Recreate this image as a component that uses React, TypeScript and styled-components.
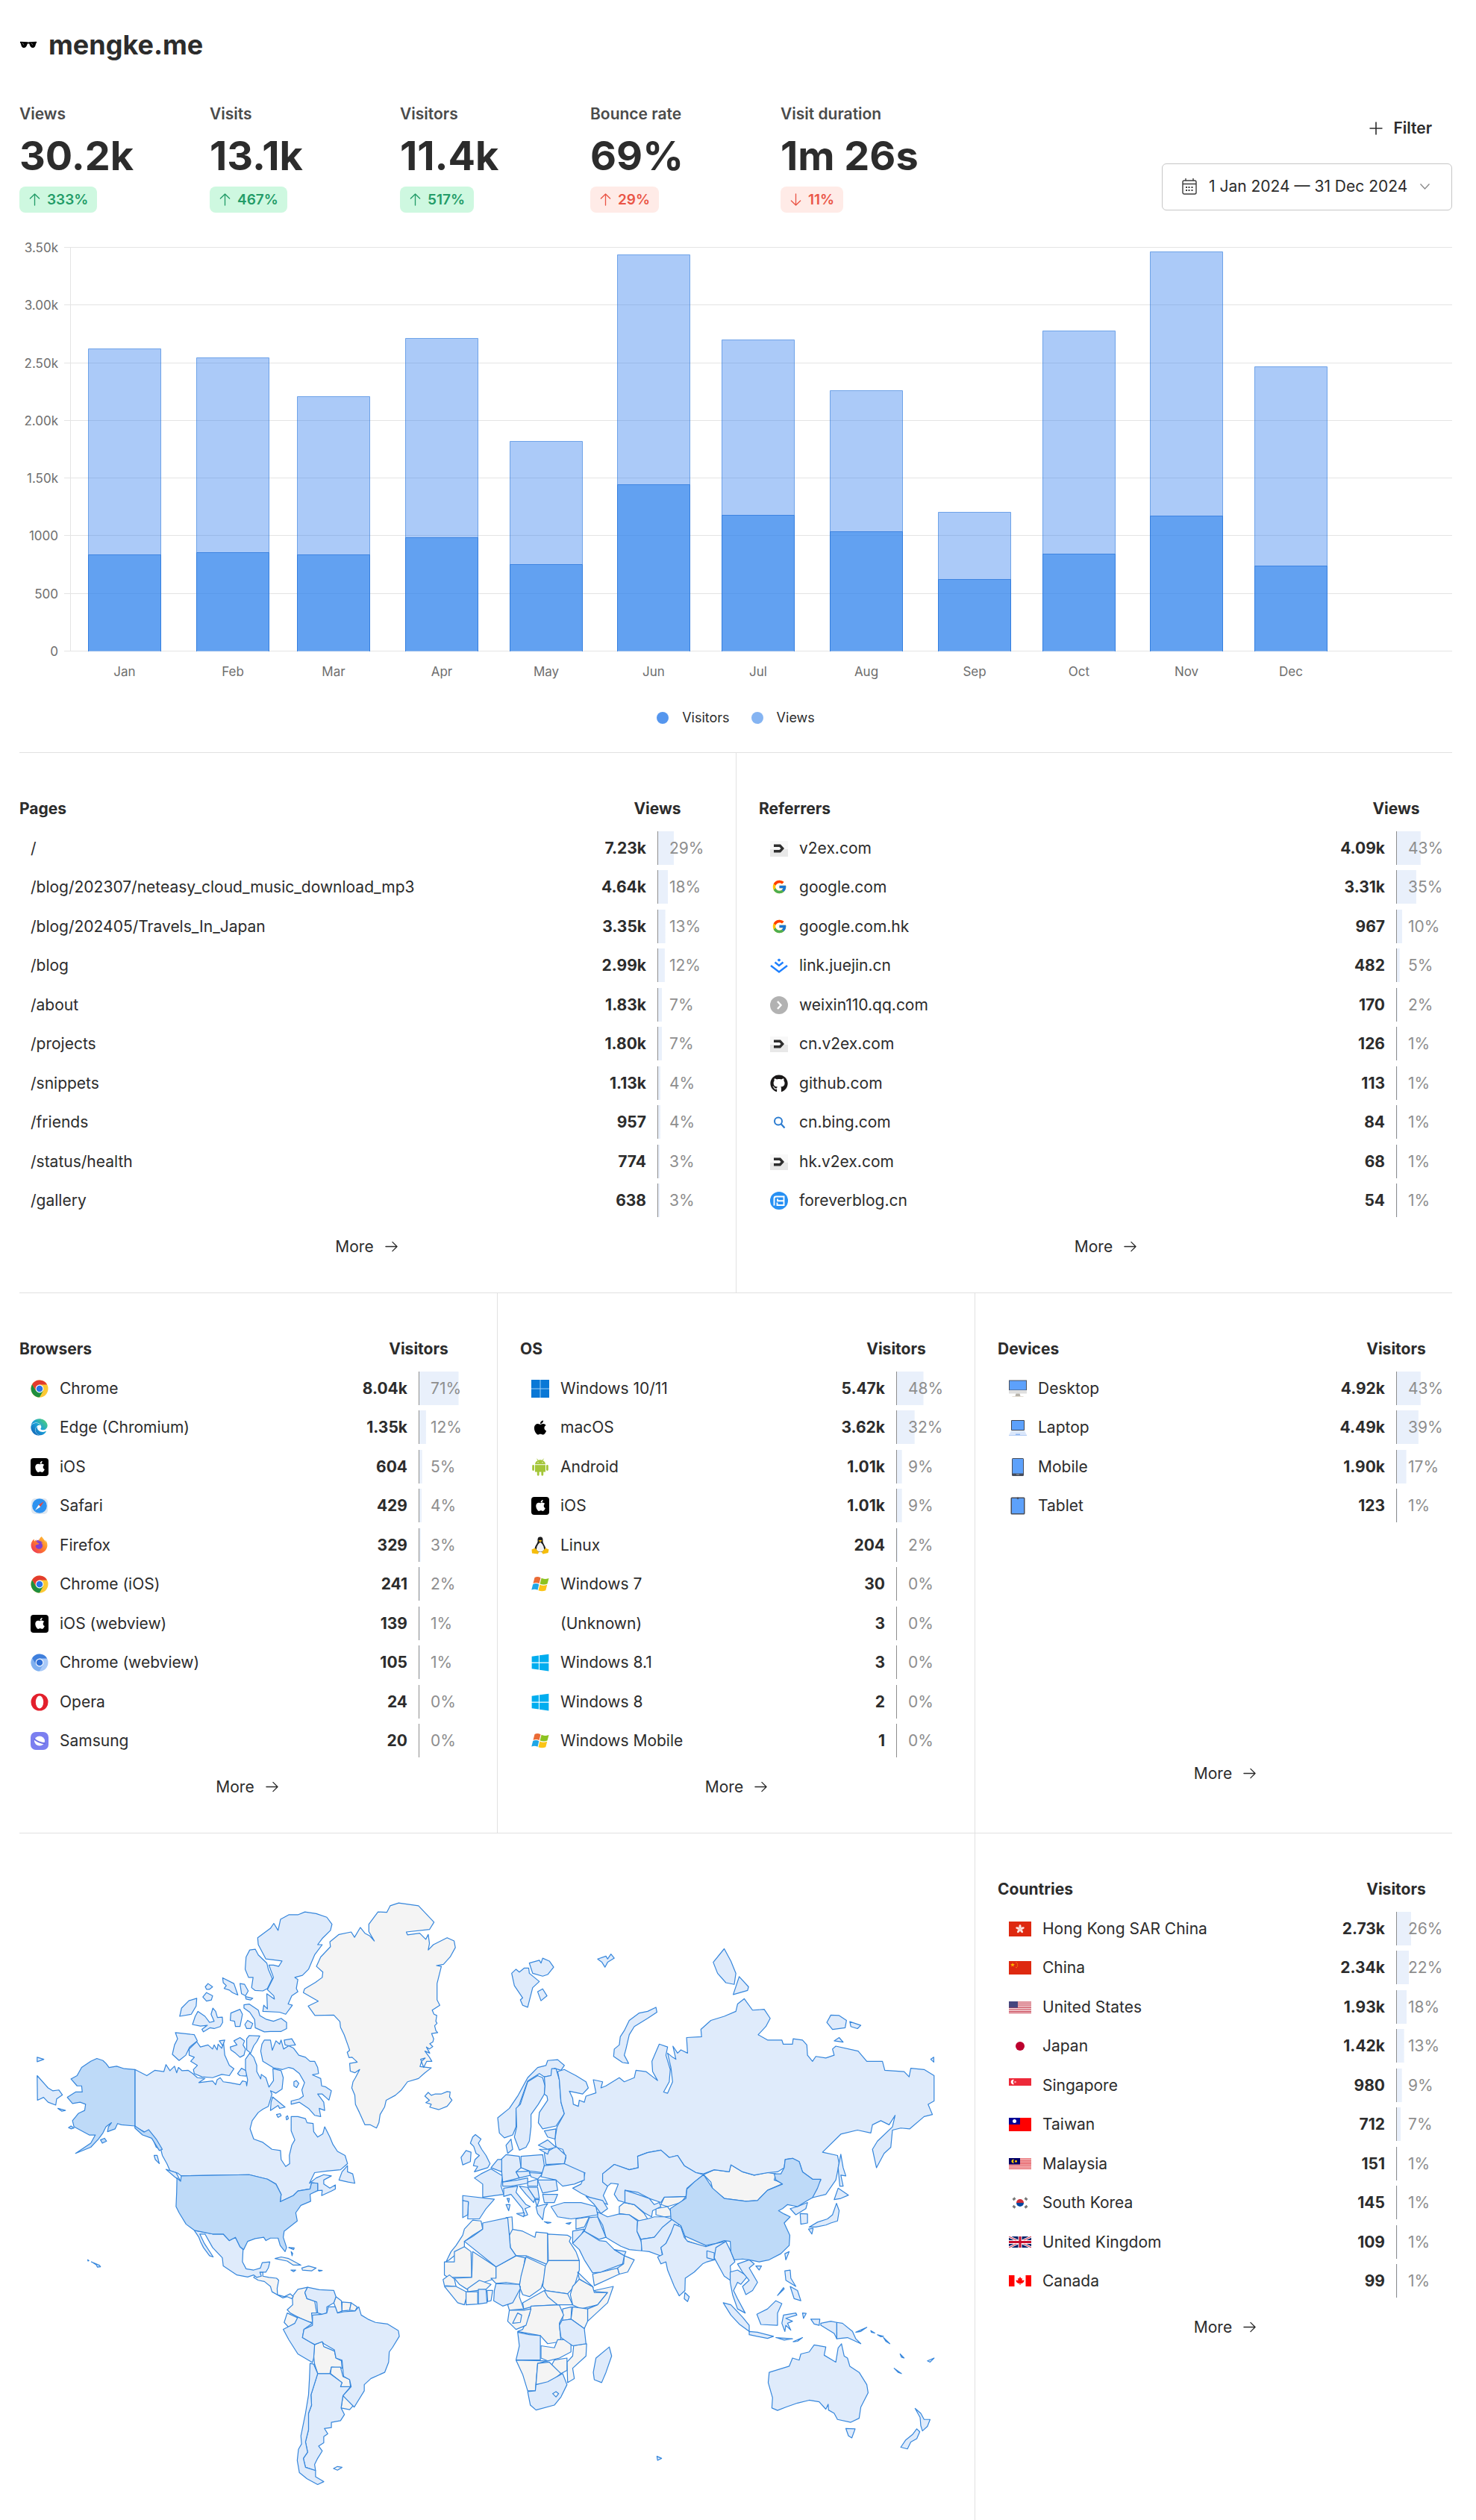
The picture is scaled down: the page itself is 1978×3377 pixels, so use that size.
import React from "react";
import styled, { createGlobalStyle } from "styled-components";
import { FcGoogle } from "react-icons/fc";
import { FaApple, FaEdge, FaFirefoxBrowser, FaGithub, FaWindows } from "react-icons/fa";

const Global = createGlobalStyle`
  *, *::before, *::after { box-sizing: border-box; }
  body {
    margin: 0;
    background: #fff;
    color: #2c2c2c;
    font-family: Inter, "Liberation Sans", sans-serif;
    font-size: 21px;
    line-height: 30px;
  }
`;

const Page = styled.main`
  padding: 0 32px 0 26px;
`;

const Header = styled.header`
  display: flex;
  align-items: center;
  gap: 15px;
  height: 120px;
`;

const Title = styled.h1`
  margin: 0;
  font-size: 36px;
  line-height: 48px;
  font-weight: 700;
`;

const Metrics = styled.section`
  display: flex;
  justify-content: space-between;
  align-items: center;
  padding: 18px 0 15px;
`;

const Stats = styled.dl`
  display: grid;
  grid-template-columns: repeat(5, 255px);
  margin: 0;
`;

const Stat = styled.div`
  display: flex;
  flex-direction: column;
  align-items: flex-start;
  gap: 14px;
`;

const StatLabel = styled.dt`
  color: #4b4b4b;
  font-weight: 600;
`;

const StatValue = styled.dd`
  margin: 0;
  font-size: 54px;
  line-height: 54px;
  font-weight: 700;
  white-space: nowrap;
`;

const Change = styled.dd<{ $good: boolean }>`
  display: flex;
  align-items: center;
  gap: 8px;
  height: 35px;
  margin: 0;
  padding: 0 12px;
  border-radius: 8px;
  background: ${(p) => (p.$good ? "#cef8e0" : "#ffebe7")};
  color: ${(p) => (p.$good ? "#239c68" : "#ea5546")};
  font-size: 19px;
  font-weight: 600;
`;

const Controls = styled.div`
  display: flex;
  flex-direction: column;
  align-items: flex-end;
  gap: 17px;
`;

const FilterButton = styled.button`
  display: flex;
  align-items: center;
  gap: 14px;
  height: 60px;
  padding: 0 27px;
  border: 0;
  background: none;
  color: inherit;
  font: inherit;
  font-weight: 600;
`;

const DateBox = styled.label`
  display: flex;
  align-items: center;
  gap: 16px;
  height: 63px;
  padding: 0 29px 0 26px;
  border: 1px solid #c6c6c6;
  border-radius: 6px;
`;

const DateSelect = styled.select`
  appearance: none;
  padding: 0;
  border: 0;
  background: none;
  color: inherit;
  font: inherit;
`;

const Drawing = styled.svg`
  display: block;
  width: 100%;
  height: auto;
`;

const AxisText = styled.text`
  fill: #6e6e6e;
  font-family: Inter, "Liberation Sans", sans-serif;
  font-size: 17px;
`;

const Legend = styled.ul`
  display: flex;
  justify-content: center;
  align-items: center;
  gap: 29px;
  height: 48px;
  margin: 8px 0 22px;
  padding: 0;
  list-style: none;
  font-size: 18px;
`;

const LegendItem = styled.li<{ $color: string }>`
  display: flex;
  align-items: center;
  gap: 18px;
  &::before {
    content: "";
    width: 16px;
    height: 16px;
    border-radius: 50%;
    background: ${(p) => p.$color};
  }
`;

const Row = styled.section<{ $columns: string }>`
  display: grid;
  grid-template-columns: ${(p) => p.$columns};
  border-top: 1px solid #e1e1e1;
`;

const Panel = styled.article`
  padding: 45px 30px;
  &:first-child { padding-left: 0; }
  &:last-child { padding-right: 0; }
  & + & { border-left: 1px solid #e1e1e1; }
`;

const MapPanel = styled.div`
  & + article { border-left: 1px solid #e1e1e1; }
`;

const Table = styled.table`
  display: block;
`;

const TableHead = styled.thead`
  display: block;
`;

const HeadRow = styled.tr`
  display: flex;
  justify-content: space-between;
  line-height: 60px;
`;

const HeadCell = styled.th<{ $center?: boolean }>`
  width: ${(p) => (p.$center ? "150px" : "auto")};
  padding: 0;
  text-align: ${(p) => (p.$center ? "center" : "left")};
  font-weight: 700;
`;

const TableBody = styled.tbody`
  display: flow-root;
  min-height: 507px;
`;

const DataRow = styled.tr`
  display: flex;
  align-items: center;
  height: 45px;
  margin-bottom: 7px;
  &:nth-child(even) { margin-bottom: 8px; }
`;

const NameCell = styled.td`
  display: flex;
  flex: 1;
  align-items: center;
  gap: 15px;
  padding: 0 0 0 15px;
`;

const IconBox = styled.span<{ $wide?: boolean }>`
  display: flex;
  align-items: center;
  justify-content: center;
  width: ${(p) => (p.$wide ? "30px" : "24px")};
  height: 24px;
`;

const NameLink = styled.a`
  color: inherit;
  text-decoration: none;
`;

const CountCell = styled.td`
  padding: 0 15px 0 0;
  font-weight: 700;
`;

const ShareCell = styled.td<{ $share: number }>`
  width: 75px;
  height: 45px;
  padding: 0 0 0 15px;
  border-left: 1px solid #8e8e8e;
  background: linear-gradient(#e9f0fb, #e9f0fb) no-repeat left / ${(p) => p.$share}% 100%;
  color: #8e8e8e;
  line-height: 45px;
`;

const More = styled.a`
  display: flex;
  align-items: center;
  justify-content: center;
  gap: 15px;
  height: 33px;
  margin-top: 15px;
  color: inherit;
  text-decoration: none;
`;

/* ---------- small line icons ---------- */

const Arrow = ({ turn }: { turn: number }) => (
  <svg width="17" height="17" viewBox="0 0 18 18" fill="none" stroke="currentColor" strokeWidth="1.400" strokeLinecap="round" strokeLinejoin="round">
    <path d="M1 9H17M10.500 2.500L17 9L10.500 15.500" transform={`rotate(${turn} 9 9)`} />
  </svg>
);

const Glasses = () => (
  <svg width="24" height="10" viewBox="0 0 24 10">
    <path d="M1 0.800L11 1.200L12 1.800L13 1.200L23 0.800V2.500L22 3.500C21.500 7.500 20 9 18 9C15.500 9 14 7 13.200 3.500H10.800C10 7 8.500 9 6 9C4 9 2.500 7.500 2 3.500L1 2.500Z" fill="#000" />
    <path d="M4 2.500L6 5.500M16 2.500L18 5.500" stroke="#aaa" strokeWidth="0.700" />
  </svg>
);

const Plus = () => (
  <svg width="18" height="18" viewBox="0 0 18 18" stroke="currentColor" strokeWidth="1.600">
    <path d="M9 0.500V17.500M0.500 9H17.500" />
  </svg>
);

const Calendar = () => (
  <svg width="20" height="22" viewBox="0 0 20 22" fill="none" stroke="#3c3c3c" strokeWidth="1.400">
    <rect x="1" y="3" width="18" height="18" rx="2" />
    <path d="M1 7.500H19M5 0V3M15 0V3" />
    <path d="M8.500 12H10.500M12.500 12H14.500M5 16H7M8.500 16H10.500M12.500 16H14.500M5 12H7" strokeWidth="2" />
  </svg>
);

const Chevron = () => (
  <svg width="13" height="8" viewBox="0 0 13 8" fill="none" stroke="#8a8a8a" strokeWidth="1.400">
    <path d="M0.500 0.500L6.500 7L12.500 0.500" />
  </svg>
);

/* ---------- brand and device icons ---------- */

const Svg24 = ({ children }: { children: React.ReactNode }) => (
  <svg width="24" height="24" viewBox="0 0 24 24">{children}</svg>
);

const V2ex = () => (
  <Svg24>
    <rect y="2" width="24" height="11" fill="#f8f8f8" />
    <rect y="13" width="24" height="10" fill="#e8e8e8" />
    <path d="M5 6.500H14L19 12L14 17.500H5V14H12.500L14.500 12L12.500 10H5Z" fill="#2e2e2e" />
  </Svg24>
);

const Juejin = () => (
  <Svg24>
    <path d="M12 2.500L14.500 4.600L12 6.700L9.500 4.600Z" fill="#1e80ff" />
    <path d="M6.500 7.500L12 12L17.500 7.500M1 12L12 20.500L23 12" fill="none" stroke="#1e80ff" strokeWidth="2.400" />
  </Svg24>
);

const Weixin = () => (
  <Svg24>
    <circle cx="12" cy="12" r="12" fill="#b2b2b2" />
    <path d="M10 7L14.500 12L10 17" fill="none" stroke="#fff" strokeWidth="2.400" />
  </Svg24>
);

const Bing = () => (
  <Svg24>
    <circle cx="11" cy="10.500" r="5" fill="none" stroke="#2a7bd0" strokeWidth="2" />
    <path d="M14.500 14L19.500 19.500" stroke="#2a7bd0" strokeWidth="2.200" />
  </Svg24>
);

const Forever = () => (
  <Svg24>
    <circle cx="12" cy="12" r="12" fill="#2790f3" />
    <path d="M5.500 18.500V9Q5.500 6.500 8 6.500H18.500V18H9.500V14.500M18 12.200H10V9.500" fill="none" stroke="#fff" strokeWidth="1.900" />
  </Svg24>
);

const Chrome = ({ blue = false }: { blue?: boolean }) => {
  const [a, b, c] = blue ? ["#3f7fdc", "#a8c9f8", "#7fb0f0"] : ["#e33b2e", "#fcc934", "#1e8e3e"];
  return (
    <Svg24>
      <circle cx="12" cy="12" r="11.500" fill={b} />
      <path d="M2 6.300A11.500 11.500 0 0 1 22 6.500H12L7.200 14.800Z" fill={a} />
      <path d="M2 6.300A11.500 11.500 0 0 0 12 23.500L16.800 14.800L7.200 14.800Z" fill={c} />
      <circle cx="12" cy="12" r="5.400" fill="#fff" />
      <circle cx="12" cy="12" r="4.300" fill={blue ? "#2f6fd6" : "#2b74e8"} />
    </Svg24>
  );
};

const Edge = () => (
  <Svg24>
    <linearGradient id="edge" x1="0" y1="1" x2="1" y2="0">
      <stop offset="0" stopColor="#1059b0" />
      <stop offset="0.500" stopColor="#1c9fd8" />
      <stop offset="1" stopColor="#58d968" />
    </linearGradient>
    <FaEdge size={23} style={{ fill: "url(#edge)" }} />
  </Svg24>
);

const Firefox = () => (
  <Svg24>
    <linearGradient id="fox" x1="1" y1="0" x2="0" y2="1">
      <stop offset="0" stopColor="#ffd43a" />
      <stop offset="0.500" stopColor="#ff7a2e" />
      <stop offset="1" stopColor="#e9275f" />
    </linearGradient>
    <circle cx="12" cy="12.500" r="8" fill="#7f3fd0" />
    <FaFirefoxBrowser size={23} style={{ fill: "url(#fox)" }} />
  </Svg24>
);

const IosTile = () => (
  <Svg24>
    <rect width="24" height="24" rx="4" fill="#000" />
    <g transform="translate(4 3)"><FaApple size={17} color="#fff" /></g>
  </Svg24>
);

const Safari = () => (
  <Svg24>
    <rect x="1" y="2" width="22" height="21" rx="5" fill="#dfe7f0" />
    <circle cx="12" cy="12" r="9.800" fill="#2e93f0" />
    <path d="M18 6L13.200 13.200L10.800 10.800Z" fill="#e8483f" />
    <path d="M6 18L10.800 10.800L13.200 13.200Z" fill="#fff" />
  </Svg24>
);

const Opera = () => (
  <Svg24>
    <ellipse cx="12" cy="12" rx="11.500" ry="11.500" fill="#e3202c" />
    <ellipse cx="12" cy="12" rx="5.200" ry="8.500" fill="#fff" />
  </Svg24>
);

const Samsung = () => (
  <Svg24>
    <rect width="24" height="24" rx="7" fill="#7b7ff0" />
    <ellipse cx="12" cy="12" rx="7" ry="6.500" fill="#fff" />
    <path d="M4.500 9C8 12.500 14 15 20 15.500" stroke="#6b6fe4" strokeWidth="1.800" fill="none" />
  </Svg24>
);

const Windows11 = () => (
  <Svg24>
    <rect width="24" height="24" fill="#0a78d6" />
    <path d="M12 0V24M0 12H24" stroke="#9fd0f7" strokeWidth="1" />
  </Svg24>
);

const Windows7 = () => (
  <Svg24>
    <path d="M4.500 3C7.500 1.500 10 2 12.500 3.300L10.600 11C8 9.700 5.500 9.600 2.500 10.800Z" fill="#ea6b36" />
    <path d="M13.600 3.800C16.500 5.300 19.500 5.200 23.500 4L21.500 11.500C18 13 15 12.800 11.600 11.400Z" fill="#8cc220" />
    <path d="M2.200 12C5.200 10.700 8 10.900 10.300 12.200L8.500 19.800C6 18.500 3.500 18.300 0.300 19.500Z" fill="#1fa6e6" />
    <path d="M11.400 12.600C14.500 14.200 17.500 14.200 21.200 12.800L19.300 20.300C16 21.700 12.500 21.700 9.500 20.200Z" fill="#fbc416" />
  </Svg24>
);

const Android = () => (
  <Svg24>
    <g fill="#a4c639" stroke="#a4c639">
      <path d="M5 8.200A7 6 0 0 1 19 8.200Z" stroke="none" />
      <path d="M7.500 0.800L9 3M16.500 0.800L15 3" strokeWidth="0.900" />
      <path d="M5 9.200H19V18.500H5Z" stroke="none" />
      <path d="M2.600 10.500V15.500M21.400 10.500V15.500M9.200 17V22.300M14.800 17V22.300" strokeWidth="2.800" strokeLinecap="round" />
    </g>
    <circle cx="9" cy="5.600" r="0.700" fill="#fff" />
    <circle cx="15" cy="5.600" r="0.700" fill="#fff" />
  </Svg24>
);

const Tux = () => (
  <Svg24>
    <path d="M12 0.500C8.500 0.500 8.300 3.500 8.600 6.500C8.500 9.500 4.500 12 4.500 18C5 22 19 22 19.500 18C19.500 13 15.600 10 15.500 6.500C15.700 3 15.300 0.500 12 0.500Z" fill="#1d1d1d" />
    <path d="M12 8C9.500 9 6.500 14 7 18C9 21.500 15 21.500 17 18C17.500 14 14.500 9 12 8Z" fill="#f2f2f2" />
    <path d="M9.500 5.500L12 4.800L14.500 5.500L12 7.800Z" fill="#f5bd0c" />
    <path d="M0.500 17.500L5 15.500L10 21L9 23.500L1 22.500ZM23.500 17.500L19 15.500L14 21L15.500 23.500L22.500 22Z" fill="#f5bd0c" />
  </Svg24>
);

const Desktop = () => (
  <Svg24>
    <path d="M0 0.500H24V14H0Z" fill="#4b5260" />
    <path d="M1 1.500H23V13.500H1Z" fill="#5da1fb" />
    <path d="M0 14H24V18.500H0Z" fill="#dfdfdf" />
    <path d="M9.500 18.500H14.500L15.500 22H8.500Z" fill="#b6b2aa" />
    <path d="M4.500 22H19.500V23H4.500Z" fill="#e6dfd4" />
  </Svg24>
);

const Laptop = () => (
  <Svg24>
    <rect x="3" y="2" width="18" height="14" rx="1" fill="#3f4654" />
    <path d="M4 3H20V15H4Z" fill="#5da1fb" />
    <path d="M3 16.500H21L24 22H0Z" fill="#dbe7fa" />
    <path d="M0 22H24V23H0Z" fill="#b3cdf6" />
    <path d="M9 20.500H15V22H9Z" fill="#8db6f3" />
  </Svg24>
);

const Phone = () => (
  <Svg24>
    <rect x="4" width="16" height="24" rx="1.500" fill="#474d5b" />
    <rect x="5" y="1" width="14" height="19.500" fill="#5da1fb" />
    <path d="M10 22H14" stroke="#9aa1ae" strokeWidth="1" />
  </Svg24>
);

const Tablet = () => (
  <Svg24>
    <rect x="2.500" y="0.500" width="19" height="23" rx="1.500" fill="#474d5b" />
    <rect x="4" y="2" width="16" height="20" fill="#5da1fb" />
    <circle cx="12" cy="1.800" r="1.400" fill="#474d5b" />
  </Svg24>
);

/* ---------- flags ---------- */

const Flag = ({ h, children }: { h: number; children: React.ReactNode }) => (
  <svg width="30" height={h} viewBox={`0 0 30 ${h}`}>{children}</svg>
);

const starPoints = (cx: number, cy: number, r: number) =>
  Array.from({ length: 10 }, (_, i) => {
    const a = (Math.PI / 5) * i - Math.PI / 2;
    const q = i % 2 ? r * 0.42 : r;
    return `${(cx + q * Math.cos(a)).toFixed(1)},${(cy + q * Math.sin(a)).toFixed(1)}`;
  }).join(" ");

const HongKong = () => (
  <Flag h={20}>
    <rect width="30" height="20" fill="#de2910" />
    {[0, 72, 144, 216, 288].map((a) => (
      <ellipse key={a} cx="15" cy="6.800" rx="1.600" ry="2.900" fill="#fbe4e0" transform={`rotate(${a} 15 10)`} />
    ))}
  </Flag>
);
const China = () => (
  <Flag h={18}>
    <rect width="30" height="18" fill="#de2910" />
    <polygon points={starPoints(5, 5, 3)} fill="#ffb900" />
    {[[10, 2], [11.500, 4], [11.500, 6.500], [10, 8.500]].map(([x, y]) => (
      <circle key={y} cx={x} cy={y} r="0.700" fill="#f59a0a" />
    ))}
  </Flag>
);
const UnitedStates = () => (
  <Flag h={16}>
    <rect width="30" height="16" fill="#f4dcdf" />
    <path d="M0 1H30M0 3.500H30M0 6H30M0 8.500H30M0 11H30M0 13.500H30M0 15.500H30" stroke="#c8394b" strokeWidth="1.200" />
    <rect width="12" height="8.500" fill="#46467f" />
  </Flag>
);
const Japan = () => (
  <Flag h={20}>
    <rect width="30" height="20" fill="#fff" />
    <circle cx="15" cy="10" r="6" fill="#bc002d" />
  </Flag>
);
const Singapore = () => (
  <Flag h={20}>
    <rect width="30" height="20" fill="#fff" />
    <rect width="30" height="10" fill="#ed2939" />
    <path d="M7 2A3.200 3.200 0 1 0 7 8A4 4 0 0 1 7 2Z" fill="#fff" />
    <circle cx="8.500" cy="5" r="1.300" fill="#f6a6ad" />
  </Flag>
);
const Taiwan = () => (
  <Flag h={18}>
    <rect width="30" height="18" fill="#fe0000" />
    <rect width="15" height="9" fill="#000095" />
    <circle cx="7.500" cy="4.500" r="2.500" fill="#fff" />
  </Flag>
);
const Malaysia = () => (
  <Flag h={15}>
    <rect width="30" height="15" fill="#fbe3e4" />
    <path d="M0 1H30M0 3.200H30M0 5.400H30M0 7.600H30M0 9.800H30M0 12H30M0 14.200H30" stroke="#e0383f" strokeWidth="1.100" />
    <rect width="15" height="8.500" fill="#010066" />
    <path d="M7 2A2.500 2.500 0 1 0 7 6.500A3 3 0 0 1 7 2Z" fill="#fc0" />
    <circle cx="9.500" cy="4.300" r="1.500" fill="#fc0" />
  </Flag>
);
const SouthKorea = () => (
  <Flag h={20}>
    <rect width="30" height="20" fill="#fff" />
    <path d="M10 10A5 5 0 0 1 20 10Z" fill="#cd2e3a" />
    <path d="M10 10A5 5 0 0 0 20 10Z" fill="#0047a0" />
    <path d="M5.500 6L8.500 3.500M5.500 14L8.500 16.500M24.500 6L21.500 3.500M24.500 14L21.500 16.500" stroke="#777" strokeWidth="3" />
  </Flag>
);
const UnitedKingdom = () => (
  <Flag h={15}>
    <rect width="30" height="15" fill="#012169" />
    <path d="M0 0L30 15M30 0L0 15" stroke="#fff" strokeWidth="3" />
    <path d="M0 0L30 15M30 0L0 15" stroke="#c8102e" strokeWidth="1" />
    <path d="M15 0V15M0 7.500H30" stroke="#fff" strokeWidth="5" />
    <path d="M15 0V15M0 7.500H30" stroke="#c8102e" strokeWidth="3" />
  </Flag>
);
const Canada = () => (
  <Flag h={15}>
    <rect width="30" height="15" fill="#fff" />
    <path d="M0 0H7.500V15H0ZM22.500 0H30V15H22.500Z" fill="#f00" />
    <path d="M15 2L16.500 4.500L18 4L17.500 7L20.500 6.500L20 9L17.500 11H15.500V13H14.500V11H12.500L10 9L9.500 6.500L12.500 7L12 4L13.500 4.500Z" fill="#f00" />
  </Flag>
);

/* ---------- data tables ---------- */

type Entry = [name: string, count: string, share: number, icon?: React.ReactNode];

const DataTable = ({ title, unit, entries, icons, wide }: {
  title: string; unit: string; entries: Entry[]; icons?: boolean; wide?: boolean;
}) => (
  <Panel>
    <Table>
      <TableHead>
        <HeadRow>
          <HeadCell scope="col">{title}</HeadCell>
          <HeadCell scope="col" $center>{unit}</HeadCell>
        </HeadRow>
      </TableHead>
      <TableBody>
        {entries.map(([name, count, share, icon]) => (
          <DataRow key={name}>
            <NameCell>
              {icons && <IconBox $wide={wide}>{icon}</IconBox>}
              <NameLink href="#">{name}</NameLink>
            </NameCell>
            <CountCell>{count}</CountCell>
            <ShareCell $share={share}>{share}%</ShareCell>
          </DataRow>
        ))}
      </TableBody>
    </Table>
    <More href="#">More <Arrow turn={0} /></More>
  </Panel>
);

const pages: Entry[] = [
  ["/", "7.23k", 29], ["/blog/202307/neteasy_cloud_music_download_mp3", "4.64k", 18],
  ["/blog/202405/Travels_In_Japan", "3.35k", 13], ["/blog", "2.99k", 12], ["/about", "1.83k", 7],
  ["/projects", "1.80k", 7], ["/snippets", "1.13k", 4], ["/friends", "957", 4],
  ["/status/health", "774", 3], ["/gallery", "638", 3],
];
const referrers: Entry[] = [
  ["v2ex.com", "4.09k", 43, <V2ex />], ["google.com", "3.31k", 35, <FcGoogle size={21} />],
  ["google.com.hk", "967", 10, <FcGoogle size={21} />], ["link.juejin.cn", "482", 5, <Juejin />],
  ["weixin110.qq.com", "170", 2, <Weixin />], ["cn.v2ex.com", "126", 1, <V2ex />],
  ["github.com", "113", 1, <FaGithub size={24} color="#191717" />], ["cn.bing.com", "84", 1, <Bing />],
  ["hk.v2ex.com", "68", 1, <V2ex />], ["foreverblog.cn", "54", 1, <Forever />],
];
const browsers: Entry[] = [
  ["Chrome", "8.04k", 71, <Chrome />], ["Edge (Chromium)", "1.35k", 12, <Edge />],
  ["iOS", "604", 5, <IosTile />], ["Safari", "429", 4, <Safari />], ["Firefox", "329", 3, <Firefox />],
  ["Chrome (iOS)", "241", 2, <Chrome />], ["iOS (webview)", "139", 1, <IosTile />],
  ["Chrome (webview)", "105", 1, <Chrome blue />], ["Opera", "24", 0, <Opera />],
  ["Samsung", "20", 0, <Samsung />],
];
const systems: Entry[] = [
  ["Windows 10/11", "5.47k", 48, <Windows11 />], ["macOS", "3.62k", 32, <FaApple size={22} color="#000" />],
  ["Android", "1.01k", 9, <Android />], ["iOS", "1.01k", 9, <IosTile />], ["Linux", "204", 2, <Tux />],
  ["Windows 7", "30", 0, <Windows7 />], ["(Unknown)", "3", 0],
  ["Windows 8.1", "3", 0, <FaWindows size={26} color="#00adef" />],
  ["Windows 8", "2", 0, <FaWindows size={26} color="#00adef" />],
  ["Windows Mobile", "1", 0, <Windows7 />],
];
const devices: Entry[] = [
  ["Desktop", "4.92k", 43, <Desktop />], ["Laptop", "4.49k", 39, <Laptop />],
  ["Mobile", "1.90k", 17, <Phone />], ["Tablet", "123", 1, <Tablet />],
];
const countries: Entry[] = [
  ["Hong Kong SAR China", "2.73k", 26, <HongKong />], ["China", "2.34k", 22, <China />],
  ["United States", "1.93k", 18, <UnitedStates />], ["Japan", "1.42k", 13, <Japan />],
  ["Singapore", "980", 9, <Singapore />], ["Taiwan", "712", 7, <Taiwan />],
  ["Malaysia", "151", 1, <Malaysia />], ["South Korea", "145", 1, <SouthKorea />],
  ["United Kingdom", "109", 1, <UnitedKingdom />], ["Canada", "99", 1, <Canada />],
];

/* ---------- bar chart ---------- */

const months: [string, number, number, number][] = [
  ["Jan", 0, 2624, 838], ["Feb", 31, 2548, 859], ["Mar", 60, 2212, 840], ["Apr", 91, 2716, 992],
  ["May", 121, 1826, 757], ["Jun", 152, 3440, 1452], ["Jul", 182, 2705, 1182], ["Aug", 213, 2263, 1043],
  ["Sep", 244, 1212, 626], ["Oct", 274, 2785, 849], ["Nov", 305, 3466, 1177], ["Dec", 335, 2470, 744],
];
const ticks: [number, string][] = [
  [3500, "3.50k"], [3000, "3.00k"], [2500, "2.50k"], [2000, "2.00k"],
  [1500, "1.50k"], [1000, "1000"], [500, "500"], [0, "0"],
];
const BASE = 573;
const toY = (v: number) => Math.round(BASE - (v / 3500) * 541);

const Chart = () => (
  <Drawing viewBox="0 0 1920 630" role="img" aria-label="Visitors and views by month">
    <g stroke="#e4e4e4">
      {ticks.map(([v]) => <path key={v} d={`M60 ${toY(v) - 0.5}H1920`} />)}
      <path d={`M68.500 ${toY(3500)}V${BASE}`} />
    </g>
    {ticks.map(([v, t]) => (
      <AxisText key={v} x="52" y={toY(v) + 6} textAnchor="end">{t}</AxisText>
    ))}
    {months.map(([name, day, views, visitors]) => {
      const mid = Math.round(141 + day * 4.667);
      return (
        <g key={name}>
          <rect x={mid - 48.5} y={toY(views) + 0.5} width="97" height={BASE - toY(views) - 1} fill="#2c7aee" fillOpacity="0.4" />
          <path d={`M${mid - 48.5} ${BASE}V${toY(views) + 0.5}H${mid + 48.5}V${BASE}`} fill="none" stroke="#2c78dc" strokeOpacity="0.6" />
          <rect x={mid - 48.5} y={toY(visitors) + 0.5} width="97" height={BASE - toY(visitors) - 1} fill="#2680eb" fillOpacity="0.55" />
          <path d={`M${mid - 48.5} ${BASE}V${toY(visitors) + 0.5}H${mid + 48.5}V${BASE}`} fill="none" stroke="#2c78dc" strokeOpacity="0.8" />
          <AxisText x={mid} y="606" textAnchor="middle">{name}</AxisText>
        </g>
      );
    })}
  </Drawing>
);

/* ---------- world map: outlines for each hemisphere ---------- */

const LIGHT = "#dfebfb";
const GREY = "#f4f4f4";
const STRONG = "#bedaf8";

const west: [string, string[]][] = [
  [GREY, [
    "1131,146 1113,123 1113,105 1143,75 1172,76 1183,60 1211,53 1276,60 1327,100 1312,118 1236,124 1240,131 1280,127 1300,142 1308,130 1312,152 1308,168 1325,155 1370,138 1393,146 1397,162 1380,185 1358,203 1335,206 1351,208 1337,250 1337,290 1346,303 1321,315 1327,325 1336,328 1333,342 1337,347 1329,353 1333,365 1339,370 1319,372 1326,385 1323,393 1313,397 1323,404 1312,410 1302,405 1313,420 1297,415 1312,430 1320,440 1303,440 1293,455 1283,435 1298,432 1286,440 1281,453 1318,456 1297,468 1276,482 1240,490 1220,510 1200,523 1170,535 1165,551 1150,570 1146,590 1138,603 1117,595 1100,595 1082,565 1069,545 1067,523 1057,505 1061,490 1069,480 1083,460 1067,468 1052,464 1050,445 1075,442 1058,430 1048,431 1042,418 1050,413 1044,400 1032,375 1020,357 1018,343 998,327 936,328 914,305 947,293 898,272 902,263 938,247 960,235 962,222 941,208 955,185 987,160 985,148 1015,130 1055,124 1066,137 1085,113 1100,127 1115,133",
    "1297,525 1308,516 1318,523 1330,520 1350,520 1370,514 1380,515 1378,527 1386,535 1370,550 1343,558 1313,552 1318,545 1300,541 1312,535",
    "862,1015 880,997 912,992 903,1005 910,1020 935,1025 942,1055 925,1055 928,1078 905,1075 880,1065 855,1055 845,1047 863,1035",
    "1005,1015 1023,1025 1025,1050 1010,1055 1003,1040 998,1030", "1025,1028 1055,1030 1050,1048 1025,1050", "1055,1030 1075,1040 1068,1050 1050,1048",
    "845,1055 880,1067 870,1082 850,1090 835,1078",
    "935,1132 960,1125 965,1137 1000,1148 1005,1165 1023,1172 1025,1190 990,1187 985,1203 945,1203 935,1180 932,1160",
    "990,1187 1020,1187 1028,1210 1050,1217 1053,1237 1020,1235 1025,1225 987,1203",
    "1028,1257 1063,1280 1050,1291 1022,1287",
    "735,968 750,955 765,955 765,965 785,968 810,970 817,975 812,995 813,1010 835,1015 855,1008 865,1015 860,1020 845,1015 830,1018 795,1003 790,990 770,978 750,975",
    "805,922 825,918 850,922 890,938 865,938 845,928", "893,945 915,940 940,945 925,952 895,950", "857,950 873,950 866,954", "947,950 960,951 950,953", "850,895 868,896 866,900", "858,905 863,909 861,915", "997,1435 1010,1430 1025,1432 1010,1439",
  ]],
  [LIGHT, [
    "748,138 790,115 801,103 815,120 823,93 850,82 880,82 903,75 940,79 975,88 992,105 987,120 960,140 945,155 960,155 935,180 915,215 895,230 870,235 880,240 875,262 880,270 860,280 848,300 862,303 840,325 820,320 765,318 768,303 780,312 778,275 803,288 801,280 780,265 800,235 785,205 800,205 817,208 828,195 810,193 775,190 750,155",
    "722,168 740,166 750,180 778,200 783,215 796,238 780,262 765,268 740,267 728,260 733,235 718,235 707,215 710,185",
    "576,258 585,250 600,258 590,264 580,264", "568,283 580,272 600,280 596,290 580,293",
    "633,236 670,250 683,278 665,272 655,266 638,262 645,255 635,248", "690,250 705,252 717,268 708,280 695,275", "708,282 732,286 725,290 710,288",
    "492,330 498,310 522,292 548,286 546,305 530,325",
    "534,350 543,330 552,318 575,330 590,345 605,342 595,325 601,310 610,318 616,333 632,332 633,345 625,355 605,360 592,358 570,368 565,362 583,352 560,354",
    "658,340 660,322 690,313 698,325 690,355 675,355 672,342", "706,350 715,340 732,348 725,360 712,360",
    "703,302 720,300 750,315 755,328 775,337 800,342 825,335 843,345 843,360 825,367 790,367 770,368 740,358 738,338 722,320 703,310",
    "478,370 540,375 550,390 525,405 512,425 490,438 468,423 475,400 485,385",
    "523,410 548,392 560,405 585,400 600,410 605,400 615,412 618,398 630,408 636,395 640,425 655,450 670,458 655,475 630,472 600,480 565,478 540,470 537,460 550,450 528,440 540,430 523,425",
    "658,405 680,400 670,390 690,382 705,390 700,400 708,410 703,425 690,430 675,420 660,412", "712,385 720,377 755,378 745,392 735,402 725,420 712,412", "622,390 640,388 633,402", "682,470 695,457 715,465 710,476 690,475",
    "762,398 770,388 790,388 796,413 808,390 820,398 825,388 833,410 850,402 866,408 883,425 905,430 920,440 935,440 945,455 948,470 928,473 955,482 958,500 970,502 990,512 982,535 960,520 945,520 965,540 968,560 950,555 955,575 935,572 915,555 885,540 858,545 858,537 885,532 898,525 893,510 902,492 885,470 865,458 850,455 830,460 800,456 765,440 758,415",
    "835,388 860,385 872,400 850,402 838,400", "867,490 875,487 883,494 876,504 867,500", "797,527 838,552 820,555 815,548 790,560 792,540", "810,570 822,568 825,573 815,577", "841,576 846,573 849,580 843,583",
    "345,460 384,475 410,462 440,465 447,448 460,463 475,452 482,468 488,455 500,463 520,462 535,470 550,480 575,482 555,492 600,488 610,497 615,485 625,480 635,490 655,492 690,497 698,488 710,490 712,500 715,485 708,460 708,435 722,420 735,430 745,450 745,465 758,483 760,472 775,480 785,503 800,487 798,458 825,463 832,480 828,508 808,518 790,512 795,520 783,550 765,557 750,565 730,585 723,605 735,630 765,638 795,655 823,658 825,680 840,697 853,690 852,670 860,645 870,632 858,610 858,575 880,575 905,580 910,590 930,592 932,612 945,625 962,617 968,600 985,625 995,643 1010,660 1035,670 1043,690 1020,705 975,708 935,712 918,738 940,725 965,717 990,720 965,730 965,740 985,750 1003,742 1003,752 990,757 958,768 960,755 945,756 945,738 925,737 920,752 880,757 865,768 822,783 825,765 808,740 780,728 720,717 497,720 485,713 460,707 450,690 435,670 430,655 415,650 405,632 395,620 345,600",
    "1043,695 1043,710 1060,715 1067,738 1045,735 1015,730 1025,710", "447,704 480,712 495,733 475,722", "408,670 418,670 425,690 412,680",
    "540,853 600,862 635,862 655,878 675,870 690,893 700,900 698,930 710,947 735,950 757,945 763,932 788,930 783,945 775,955 755,955 760,965 745,968 735,962 715,967 680,962 635,940 632,920 600,895 575,862 558,862 573,885 602,918 590,915 570,895 560,880 555,870",
    "24,475 60,505 75,512 95,510 107,522 88,532 85,547 60,540 45,528 25,535", "24,430 46,435 24,441", "92,555 117,560 105,562",
    "912,992 950,998 998,1000 1005,1015 998,1030 975,1040 975,1055 960,1058 945,1055 942,1028 910,1020 903,1005",
    "880,1065 928,1080 900,1095 895,1115 935,1132 932,1165 928,1176 880,1155 850,1120 832,1095 850,1088 870,1080",
    "928,1060 960,1058 975,1055 980,1040 1003,1040 1010,1055 1030,1052 1068,1050 1080,1040 1088,1060 1110,1070 1135,1078 1175,1082 1210,1098 1213,1112 1190,1140 1180,1150 1178,1175 1165,1200 1120,1215 1098,1230 1098,1245 1065,1285 1028,1257 1055,1235 1050,1218 1030,1210 1025,1170 1005,1165 1000,1145 965,1130 960,1125 935,1132 918,1125 895,1115 900,1095 928,1085",
    "945,1203 985,1203 1025,1225 1020,1235 1053,1235 1028,1257 1022,1287 1033,1303 1020,1318 990,1322 990,1335 967,1337 978,1350 965,1357 965,1372 948,1380 960,1392 945,1410 935,1425 938,1440 905,1432 898,1410 912,1395 905,1370 915,1340 915,1300 925,1280 923,1255 940,1215",
    "920,1178 932,1180 945,1203 940,1215 923,1255 925,1280 915,1300 915,1340 905,1370 912,1395 898,1410 905,1432 938,1440 938,1455 965,1467 945,1474 910,1460 885,1445 878,1415 882,1388 892,1375 890,1355 905,1300 915,1255 918,1215",
  ]],
  [STRONG, [
    "345,460 345,598 300,595 288,592 280,605 255,612 258,600 268,590 250,600 240,615 225,630 200,650 150,665 200,640 215,620 195,620 170,610 145,600 140,585 160,567 180,560 183,545 165,540 140,543 123,528 150,515 172,515 170,500 155,500 135,483 155,475 170,455 200,440 220,433 240,438 250,445 260,455 285,452 310,458",
    "345,598 375,613 390,607 415,630 435,655 425,658 400,628 370,620 345,603", "232,632 245,628 252,635 238,640", "127,602 135,598 145,603 135,605",
    "497,720 720,717 780,728 808,740 825,765 822,783 865,768 880,757 920,752 925,737 945,738 945,756 920,765 922,782 890,792 873,810 878,830 835,855 832,870 843,895 838,905 822,890 815,872 790,872 775,878 768,870 740,873 715,880 702,900 690,893 675,870 655,878 635,862 600,862 540,853 513,838 490,810 480,795 482,760 483,725 495,733",
    "202,930 228,938 232,942 222,943 218,937", "190,925 194,927 191,928",
  ]],
];

const east: [string, string[]][] = [
  [GREY, [
    "515,795 530,785 560,790 590,812 600,825 575,830 545,815 515,812", "650,772 715,770 700,785 660,795 640,790", "625,800 660,795 680,818 650,820 625,815", "712,867 775,887 775,895 715,878",
    "768,717 800,705 845,710 850,693 885,710 920,718 960,712 985,715 980,730 1008,738 960,755 930,780 895,782 830,775 795,752 790,735",
    "75,828 100,830 105,850 75,865 50,880 50,895 5,925 -5,930 10,905 25,890 45,865 50,850",
    "190,850 225,855 262,870 265,857 300,860 300,937 235,915 205,915 188,895 185,865", "300,862 360,865 370,870 365,880 385,905 395,927 302,927", "175,822 193,820 195,850 185,865",
    "-10,930 20,930 20,905 50,893 70,905 72,968 15,968 5,970 -10,962", "75,905 145,942 145,970 90,985 60,998 35,985 20,970 72,968", "145,942 205,915 232,920 225,960 215,985 175,980 145,983 130,970 145,970",
    "235,918 293,940 290,970 280,995 245,1015 225,1010 215,990 220,965", "302,927 395,927 395,950 380,990 360,1008 295,1000 285,990 293,940",
    "-14,973 5,962 20,972 25,990 -10,988", "-10,990 25,990 60,1005 50,1035 30,1030 5,1005", "55,1003 90,1003 90,1033 55,1035", "118,1000 135,1000 130,1025 120,1027", "60,995 95,975 130,985 115,997 60,1003",
    "218,990 215,1015 228,1045 185,1048 180,1035 200,1020", "225,1030 290,1000 330,1035 260,1038 228,1045", "290,1000 360,1008 375,1035 330,1035 300,1015",
    "375,990 395,972 435,990 440,1005 480,1005 450,1035 400,1045 375,1035 368,1010", "390,955 437,992 395,972", "440,1000 497,990 480,1030 420,1075 420,1045 450,1035 480,1005 445,1003",
    "375,1040 420,1045 420,1075 410,1093 370,1070", "345,1045 372,1040 370,1070 345,1073",
    "250,1038 335,1035 348,1060 335,1080 340,1125 300,1130 278,1110 210,1100 225,1095 245,1060", "185,1048 228,1048 250,1045 235,1085 205,1095 180,1075", "210,1055 222,1060 218,1078 195,1080",
    "280,1135 320,1140 330,1120 370,1120 370,1150 335,1165 300,1172 280,1165", "378,1135 417,1130 415,1160 375,1190 380,1215 360,1225 358,1175 375,1160", "320,1170 358,1165 358,1195 340,1203 310,1185",
    "205,1170 300,1172 270,1178 263,1245 240,1245 225,1205", "270,1178 305,1175 340,1203 305,1225 265,1230",
    "435,960 510,945 515,960 440,988", "530,915 560,925 540,955 515,960 510,945 528,935", "385,825 425,820 410,845 385,850",
  ]],
  [LIGHT, [
    "75,625 83,619 100,630 92,640 102,655 115,670 127,690 120,700 80,710 90,697 77,695 82,680 95,670 85,665 78,648 68,640", "40,675 55,658 70,662 68,685 45,693",
    "150,578 185,555 210,525 240,480 270,455 295,450 300,438 330,436 350,450 340,462 320,457 310,475 290,478 275,470 240,488 215,545 205,560 205,600 195,620 170,627 155,615",
    "270,475 285,480 292,500 290,520 272,545 250,570 250,600 245,635 235,650 215,657 200,625 207,600 205,555 218,545 240,490",
    "290,478 310,475 312,458 325,458 335,485 340,540 350,568 325,598 285,605 272,590 275,565 300,535 298,525 290,520 292,500", "175,645 190,630 195,655 180,665",
    "328,600 350,568 340,540 335,485 330,465 350,460 385,475 415,490 422,505 405,520 365,513 375,530 377,545 392,550 395,535 410,540 415,525 445,517 437,485 465,490 460,505 475,500 515,480 530,490 560,480 565,462 595,465 630,487 615,465 613,440 635,398 660,405 655,425 668,460 665,490 648,515 660,518 675,490 670,455 660,420 675,430 685,435 676,403 690,420 700,412 720,420 717,382 762,380 760,362 790,340 830,330 865,318 870,300 890,287 915,315 950,313 968,335 955,355 932,375 960,388 1003,388 1007,398 1035,398 1037,385 1065,388 1078,400 1080,425 1095,440 1105,428 1135,432 1160,425 1155,410 1165,403 1232,415 1258,440 1305,440 1312,462 1370,465 1385,478 1390,457 1430,460 1460,475 1460,537 1442,545 1455,570 1430,575 1387,605 1360,603 1335,608 1330,650 1310,665 1287,700 1275,655 1290,635 1335,600 1343,572 1325,595 1300,585 1275,595 1270,615 1230,608 1180,618 1125,662 1170,670 1175,690 1165,730 1135,765 1095,773 1098,755 1120,730 1095,728 1065,710 1055,685 1035,677 1013,680 1010,700 990,710 960,712 920,718 885,710 850,693 845,710 800,705 768,715 745,712 710,695 690,670 665,675 640,657 600,663 570,672 572,700 545,705 500,692 465,715 465,735 480,745 467,768 480,790 465,785 440,778 400,762 375,750 400,740 410,720 412,712 380,710 350,690 355,675 345,655 325,650 322,630 325,615",
    "465,715 500,692 545,705 572,700 570,672 600,663 640,657 665,675 690,670 710,695 745,712 768,717 740,735 718,750 715,770 650,772 640,785 605,775 570,760 532,755 532,785 512,780 500,765 512,740 490,738 480,745 465,735",
    "532,755 570,765 605,775 620,790 635,785 640,795 615,805 612,820 590,810 560,790 532,785",
    "450,808 480,820 515,813 545,815 570,830 568,855 583,885 582,903 545,900 520,892 495,880 475,870 465,840 450,820", "570,830 600,825 620,820 650,820 675,825 645,850 620,870 580,875 568,855", "580,875 620,870 645,845 675,825 695,838 670,860 655,885 640,895 645,917 605,905 583,903",
    "670,860 680,838 700,845 710,870 720,880 775,893 805,885 835,880 828,900 800,925 778,930 765,935 740,955 713,970 712,1000 695,1013 680,990 660,950 655,930 640,935 630,918 645,912 640,895 655,885", "778,903 800,908 800,925 778,920", "712,1005 725,1015 720,1027 710,1020",
    "925,940 942,940 935,950", "1012,910 1025,905 1015,925", "1028,800 1050,795 1080,785 1075,800 1055,810 1045,815", "1058,812 1080,813 1080,835 1060,838",
    "1167,787 1175,805 1170,830 1150,835 1135,840 1105,845 1085,845 1110,833 1140,825 1155,815", "1083,850 1097,848 1093,862", "1172,750 1203,767 1180,775 1160,778", "1180,667 1187,700 1195,720 1180,718 1187,745 1177,745 1172,700",
    "805,895 835,880 850,905 862,930 848,940 850,960 855,990 848,975 830,965 820,950 800,920", "848,955 870,950 900,965 880,985 870,980 858,1000 870,1020 893,1055 870,1045 855,1010 848,980", "870,935 905,925 920,935 905,945 930,980 915,1000 895,1010 885,990 905,975 885,955",
    "827,1030 850,1035 885,1065 905,1085 905,1100 875,1082 850,1060", "905,1100 930,1102 978,1112 960,1117 905,1108", "928,1058 960,1045 985,1025 1003,1032 990,1055 990,1085 940,1083", "1008,1060 1045,1055 1048,1060 1015,1068 1035,1075 1020,1080 1030,1097 1015,1085 1012,1100 1003,1080",
    "1012,952 1028,950 1030,970 1045,990 1015,975", "1028,990 1050,1000 1060,1025 1040,1020", "990,1012 1008,993 1010,996",
    "1120,1080 1150,1075 1168,1078 1168,1118 1160,1105 1120,1085", "1168,1078 1185,1080 1215,1100 1225,1118 1240,1130 1200,1115 1168,1118", "1090,1070 1117,1070 1115,1085 1100,1082", "1225,1102 1258,1090 1240,1100", "1270,1098 1282,1104 1272,1102", "1290,1108 1308,1112 1300,1113", "1308,1115 1327,1130 1315,1124", "985,1115 1035,1118 1010,1121", "1037,1125 1065,1115 1050,1124", "1065,1055 1076,1056 1068,1068",
    "1340,1190 1362,1203 1352,1200", "1358,1155 1370,1165 1362,1163", "1440,1172 1460,1165 1448,1175",
    "965,1200 1025,1185 1035,1165 1055,1170 1060,1155 1085,1150 1100,1133 1135,1138 1130,1158 1165,1175 1172,1140 1182,1130 1190,1160 1200,1165 1207,1185 1235,1200 1258,1230 1262,1250 1240,1285 1235,1312 1210,1322 1170,1315 1160,1300 1143,1292 1142,1278 1135,1290 1115,1272 1085,1268 1050,1275 1015,1285 990,1293 973,1287 975,1262 962,1225",
    "1195,1337 1223,1338 1213,1360 1203,1355", "1403,1288 1420,1300 1430,1315 1448,1315 1440,1332 1425,1343 1420,1330 1418,1310", "1408,1338 1417,1345 1408,1362 1390,1370 1380,1387 1360,1383 1375,1365 1395,1352", "628,1405 642,1410 630,1415",
    "192,225 205,215 215,222 230,212 243,212 245,225 275,245 255,260 240,308 225,303 218,290 225,285 200,255", "245,200 275,193 280,200 285,188 305,195 318,210 300,228 285,232 255,225", "270,270 285,263 298,280 280,292", "450,190 475,183 480,190 490,178 500,188 480,198 472,210 463,198",
    "625,308 628,320 600,335 560,355 545,375 535,410 530,425 543,445 525,443 498,428 500,410 515,400 518,380 530,365 545,340 575,322 600,318", "797,198 830,165 850,195 865,225 860,252 835,248 810,225", "875,233 903,258 900,267 857,277",
    "1138,345 1150,327 1175,328 1197,340 1193,358 1155,362", "1207,343 1240,352 1230,360 1210,355", "1160,390 1175,382 1187,393", "1450,435 1459,430 1459,442",
    "80,725 100,715 130,703 165,720 160,745 168,765 105,772 105,740", "45,768 140,777 115,800 95,825 60,825 62,785 45,780", "45,780 62,783 60,815 45,822", "160,680 175,668 215,672 220,700 205,710 215,725 165,735 162,710", "130,700 150,680 162,680 162,710", "165,735 210,730 240,725 240,738 190,745 165,745",
    "168,750 210,745 205,760 235,790 248,795 232,800 240,815 230,818 225,800 190,765 168,770", "207,812 230,810 228,820", "175,790 187,790 183,805", "178,775 185,775 183,785", "220,672 285,668 290,695 285,712 245,708 220,700", "205,710 245,708 250,718 215,725", "245,712 285,714 270,728 250,722",
    "290,665 325,648 355,670 350,690 295,692", "290,610 325,605 322,630 300,625", "272,645 300,632 325,650 300,655", "275,655 305,655 300,667", "290,695 350,690 410,712 410,730 380,740 345,745 325,730 280,722", "270,730 325,730 330,755 285,762", "240,735 270,728 270,745 240,745", "215,745 240,748 262,775 258,785 235,765", "240,748 270,748 275,775 262,775", "262,778 275,778 268,795", "285,765 330,765 320,785 290,785", "265,795 300,788 290,800 285,827 270,812",
    "310,795 350,785 400,785 445,795 450,815 400,822 370,825 330,820", "355,836 370,834 365,838", "290,832 310,834 300,836", "415,770 465,780 480,800 460,812 440,790",
    "425,822 450,820 475,870 455,875 410,855", "375,855 410,850 400,865 375,885", "375,885 410,855 455,878 475,880 500,900 530,915 525,935 460,955 435,957 410,925 395,900", "500,900 535,905 530,915",
    "105,835 180,822 185,865 188,895 205,915 145,942 50,880 75,868 105,850", "92,997 115,997 118,1030 92,1033", "145,983 215,985 218,995 195,1030 165,1038 138,1025 140,1000", "343,1073 370,1070 410,1093 415,1130 375,1135 340,1115 335,1085",
    "210,1102 245,1108 278,1110 278,1170 205,1170 215,1135", "240,1247 263,1245 265,1230 300,1223 345,1203 358,1230 340,1260 320,1280 265,1292 248,1280", "485,1138 492,1160 475,1200 462,1225 440,1218 437,1200 445,1165",
  ]],
  [STRONG, [
    "768,717 795,750 830,775 895,782 930,780 960,755 1005,740 985,730 980,715 1000,715 1010,700 1013,680 1035,677 1055,685 1065,710 1095,728 1120,728 1110,750 1095,773 1080,780 1050,795 1020,790 1005,800 993,805 1010,813 1028,820 1010,835 1027,865 1025,890 1000,910 965,925 935,930 905,925 885,923 860,925 850,905 848,880 830,878 805,885 775,890 712,867 700,842 670,825 668,800 715,775 718,752 740,735",
  ]],
  [GREY, ["315,1252 325,1247 333,1252 325,1260"]],
];

const Shapes = ({ groups, transform }: { groups: [string, string[]][]; transform: string }) => (
  <g transform={transform}>
    {groups.map(([fill, shapes], i) => (
      <g key={i} fill={fill}>
        {shapes.map((points) => <polygon key={points} points={points} vectorEffect="non-scaling-stroke" />)}
      </g>
    ))}
  </g>
);

const WorldMap = () => (
  <Drawing viewBox="0 0 1280 921" role="img" aria-label="Visitors by country" stroke="#3586dc" strokeWidth="1.200" strokeLinejoin="round">
    <Shapes groups={west} transform="translate(14 64) scale(0.40816 0.54847)" />
    <Shapes groups={east} transform="translate(574 64) scale(0.44643 0.54847)" />
  </Drawing>
);

const stats: [string, string, string, boolean, boolean][] = [
  ["Views", "30.2k", "333%", true, true],
  ["Visits", "13.1k", "467%", true, true],
  ["Visitors", "11.4k", "517%", true, true],
  ["Bounce rate", "69%", "29%", true, false],
  ["Visit duration", "1m 26s", "11%", false, false],
];

export default function App() {
  return (
    <Page>
      <Global />
      <Header>
        <Glasses />
        <Title>mengke.me</Title>
      </Header>
      <Metrics>
        <Stats>
          {stats.map(([label, value, change, up, good]) => (
            <Stat key={label}>
              <StatLabel>{label}</StatLabel>
              <StatValue>{value}</StatValue>
              <Change $good={good}><Arrow turn={up ? -90 : 90} />{change}</Change>
            </Stat>
          ))}
        </Stats>
        <Controls>
          <FilterButton type="button"><Plus />Filter</FilterButton>
          <DateBox>
            <Calendar />
            <DateSelect aria-label="Date range">
              <option>1 Jan 2024 — 31 Dec 2024</option>
            </DateSelect>
            <Chevron />
          </DateBox>
        </Controls>
      </Metrics>
      <Chart />
      <Legend>
        <LegendItem $color="#5596ee">Visitors</LegendItem>
        <LegendItem $color="#85b4f2">Views</LegendItem>
      </Legend>
      <Row $columns="1fr 1fr">
        <DataTable title="Pages" unit="Views" entries={pages} />
        <DataTable title="Referrers" unit="Views" entries={referrers} icons />
      </Row>
      <Row $columns="1fr 1fr 1fr">
        <DataTable title="Browsers" unit="Visitors" entries={browsers} icons />
        <DataTable title="OS" unit="Visitors" entries={systems} icons />
        <DataTable title="Devices" unit="Visitors" entries={devices} icons />
      </Row>
      <Row $columns="2fr 1fr">
        <MapPanel><WorldMap /></MapPanel>
        <DataTable title="Countries" unit="Visitors" entries={countries} icons wide />
      </Row>
    </Page>
  );
}
